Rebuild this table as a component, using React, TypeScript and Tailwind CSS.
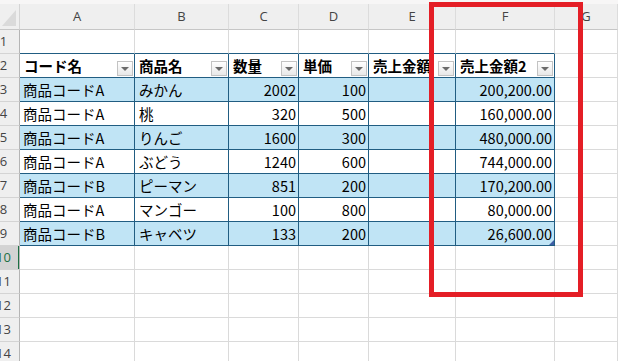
import React from 'react';

type Row = [string, string, number, number, string];

const salesRows: Row[] = [
  ['商品コードA', 'みかん', 2002, 100, '200,200.00'],
  ['商品コードA', '桃', 320, 500, '160,000.00'],
  ['商品コードA', 'りんご', 1600, 300, '480,000.00'],
  ['商品コードA', 'ぶどう', 1240, 600, '744,000.00'],
  ['商品コードB', 'ピーマン', 851, 200, '170,200.00'],
  ['商品コードA', 'マンゴー', 100, 800, '80,000.00'],
  ['商品コードB', 'キャベツ', 133, 200, '26,600.00'],
];

const headers = ['コード名', '商品名', '数量', '単価', '売上金額', '売上金額2'];
const colLetters = ['A', 'B', 'C', 'D', 'E', 'F', 'G'];

const gridCols = 'grid grid-cols-[20px_115px_94px_70px_70px_87px_99px_1fr]';
const cellFont = { fontFamily: '"Noto Sans CJK JP", "Noto Sans", sans-serif' };

// filter button on the table header cells
const FilterButton = () => (
  <span className="absolute right-[1px] bottom-[1px] w-[16px] h-[15px] border border-[#c3c3c3] bg-gradient-to-b from-white to-[#e8e8e8] flex items-center justify-center">
    <span className="w-0 h-0 border-l-[4px] border-r-[4px] border-t-[4px] border-l-transparent border-r-transparent border-t-[#6b6b6b]" />
  </span>
);

const RowHead = ({ n, active = false }: { n: number; active?: boolean }) => (
  <div
    className={
      active
        ? 'relative h-[24px] overflow-hidden bg-[#d3d3d3] border-r border-b border-r-[#b5b5b5] border-b-[#d4d4d4] flex items-center text-[13px] text-[#1d7044]'
        : 'relative h-[24px] overflow-hidden bg-[#efefef] border-r border-b border-r-[#b5b5b5] border-b-[#d4d4d4] flex items-center text-[13px] text-[#444]'
    }
  >
    <span className="-ml-[12px] w-[31px] shrink-0 text-center">{n}</span>
    {active && <span className="absolute right-[-1px] top-0 bottom-0 w-[2px] bg-[#1d7044]" />}
  </div>
);

const Blank = ({ tableTop = false }: { tableTop?: boolean }) => (
  <div
    className={
      tableTop
        ? 'h-[24px] border-r border-b border-r-[#dadada] border-b-[#215d82]'
        : 'h-[24px] border-r border-b border-[#dadada]'
    }
  />
);

export default function App() {
  return (
    <div
      className="relative w-[618px] h-[361px] overflow-hidden bg-white"
      style={{ fontFamily: '"Open Sans", "Liberation Sans", sans-serif' }}
    >
      <div className="h-[4px] bg-[#f7f6f6]" />

      <div className={gridCols}>
        {/* column letters */}
        <div className="relative h-[26px] bg-[#efefef] border-r border-b border-r-[#d4d4d4] border-b-[#c6c6c6]">
          <svg className="absolute left-[2px] top-[6px]" width="15" height="16" viewBox="0 0 15 16">
            <polygon points="0,16 14,0 14,16" fill="#dadada" />
          </svg>
        </div>
        {colLetters.map((c) => (
          <div
            key={c}
            className="h-[26px] bg-[#efefef] border-r border-b border-r-[#dcdcdc] border-b-[#c6c6c6] flex items-center justify-center text-[13px] text-[#444]"
          >
            {c}
          </div>
        ))}

        {/* row 1 */}
        <RowHead n={1} />
        {[0, 1, 2, 3, 4, 5].map((i) => (
          <Blank key={i} tableTop />
        ))}
        <Blank />

        {/* row 2: table header */}
        <RowHead n={2} />
        {headers.map((h) => (
          <div
            key={h}
            className="relative h-[24px] overflow-hidden bg-white border-r border-b border-[#215d82] flex items-center pl-[4px] text-[14.5px] font-bold text-black whitespace-nowrap"
            style={cellFont}
          >
            {h}
            <FilterButton />
          </div>
        ))}
        <Blank />

        {/* rows 3-9: table body */}
        {salesRows.map((r, i) => {
          const band = i % 2 === 0;
          const cell = band
            ? 'relative h-[24px] bg-[#c0e4f5] border-r border-b border-[#215d82] flex items-center text-[14.5px] text-black whitespace-nowrap'
            : 'relative h-[24px] bg-white border-r border-b border-[#215d82] flex items-center text-[14.5px] text-black whitespace-nowrap';
          return (
            <React.Fragment key={i}>
              <RowHead n={i + 3} />
              <div className={cell + ' pl-[3px]'} style={cellFont}>{r[0]}</div>
              <div className={cell + ' pl-[4px]'} style={cellFont}>{r[1]}</div>
              <div className={cell + ' justify-end pr-[2px]'} style={cellFont}>{r[2]}</div>
              <div className={cell + ' justify-end pr-[2px]'} style={cellFont}>{r[3]}</div>
              <div className={cell} style={cellFont} />
              <div className={cell + ' justify-end pr-[2px]'} style={cellFont}>
                {r[4]}
                {i === salesRows.length - 1 && (
                  <span className="absolute right-0 bottom-0 w-0 h-0 border-l-[5px] border-b-[5px] border-l-transparent border-b-[#3e5ea6]" />
                )}
              </div>
              <Blank />
            </React.Fragment>
          );
        })}

        {/* empty rows below the table */}
        {[10, 11, 12, 13, 14].map((n) => (
          <React.Fragment key={n}>
            <RowHead n={n} active={n === 10} />
            {[0, 1, 2, 3, 4, 5, 6].map((c) => (
              <Blank key={c} />
            ))}
          </React.Fragment>
        ))}
      </div>

      {/* highlight frame around column F */}
      <div className="absolute left-[429px] top-[2px] w-[154px] h-[295px] border-[5px] border-[#e41e26]" />
    </div>
  );
}
